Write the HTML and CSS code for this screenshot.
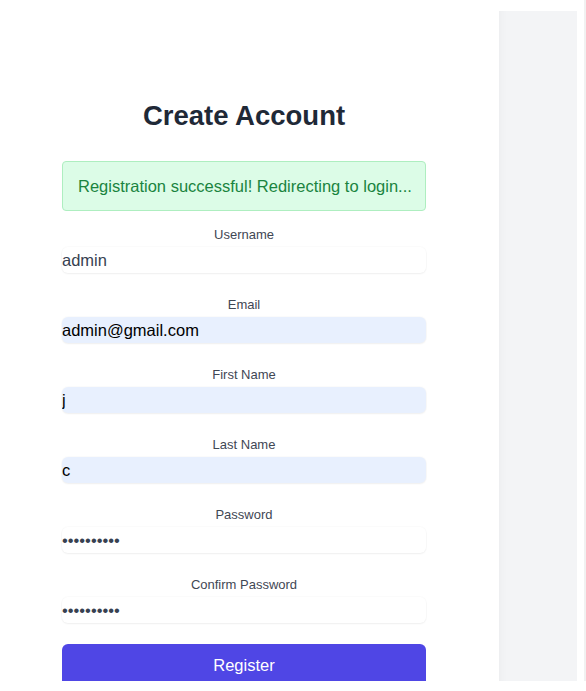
FILE: index.html
```html
<!DOCTYPE html>
<html lang="en">
<head>
<meta charset="utf-8">
<title>Create Account</title>
<link rel="stylesheet" href="styles.css">
</head>
<body>
<div class="frame">
  <main class="main">
    <form class="form">
      <h1 class="title">Create Account</h1>
      <div class="alert">Registration successful! Redirecting to login...</div>
      <div class="field">
        <label class="label" for="username">Username</label>
        <input class="input" id="username" type="text" value="admin">
      </div>
      <div class="field">
        <label class="label" for="email">Email</label>
        <input class="input autofill" id="email" type="email" value="admin@gmail.com">
      </div>
      <div class="field">
        <label class="label" for="first">First Name</label>
        <input class="input autofill" id="first" type="text" value="j">
      </div>
      <div class="field">
        <label class="label" for="last">Last Name</label>
        <input class="input autofill" id="last" type="text" value="c">
      </div>
      <div class="field">
        <label class="label" for="password">Password</label>
        <input class="input" id="password" type="password" value="admin12345">
      </div>
      <div class="field">
        <label class="label" for="confirm">Confirm Password</label>
        <input class="input" id="confirm" type="password" value="admin12345">
      </div>
      <button class="button" type="button">Register</button>
    </form>
  </main>
  <aside class="side"></aside>
</div>
</body>
</html>
```

FILE: styles.css
```css
html, body {
  margin: 0;
  padding: 0;
  background: #ffffff;
}

body {
  font-family: "Liberation Sans", Arial, sans-serif;
  width: 586px;
  height: 691px;
  overflow: hidden;
}

.frame {
  display: flex;
  width: 584px;
  height: 681px;
  overflow: hidden;
  border-right: 2px solid #f1f1f1;
}

.main {
  width: 499px;
  flex: none;
  box-sizing: border-box;
  padding: 98px 0 0 62px;
}

.form {
  width: 364px;
  display: flex;
  flex-direction: column;
}

.title {
  margin: 0;
  font-size: 27.5px;
  line-height: 36px;
  font-weight: 700;
  text-align: center;
  color: #1f2937;
}

.alert {
  margin-top: 27px;
  padding: 15px 8px 15px 15px;
  border: 1px solid #aeeec0;
  border-radius: 4px;
  background: #dcfce7;
  color: #1a843f;
  font-size: 16.5px;
  line-height: 18px;
  white-space: nowrap;
  overflow: hidden;
}

.field {
  display: flex;
  flex-direction: column;
  margin-top: 24px;
}

.alert + .field {
  margin-top: 16px;
}

.label {
  display: block;
  text-align: center;
  font-size: 13px;
  line-height: 16px;
  color: #3f4754;
  margin-bottom: 4px;
}

.input {
  box-sizing: border-box;
  width: 100%;
  height: 26px;
  margin: 0;
  padding: 0;
  border: none;
  border-radius: 6px;
  background: #ffffff;
  box-shadow: 0 1px 2px 0 rgba(0, 0, 0, 0.05), 0 0 0 1px rgba(0, 0, 0, 0.015);
  font-family: "Liberation Sans", Arial, sans-serif;
  font-size: 16.5px;
  color: #374151;
  outline: none;
}

.input.autofill {
  background: #e8f0fe;
  color: #000000;
}

.button {
  margin-top: 21px;
  height: 42px;
  border: none;
  border-radius: 6px;
  background: #4f46e5;
  color: #ffffff;
  font-family: "Liberation Sans", Arial, sans-serif;
  font-size: 16.5px;
  padding: 0;
}

.side {
  width: 78px;
  flex: none;
  margin-top: 11px;
  background: #f3f4f6;
  box-shadow: inset 10px 0 8px -8px rgba(0, 0, 0, 0.03);
}
```
